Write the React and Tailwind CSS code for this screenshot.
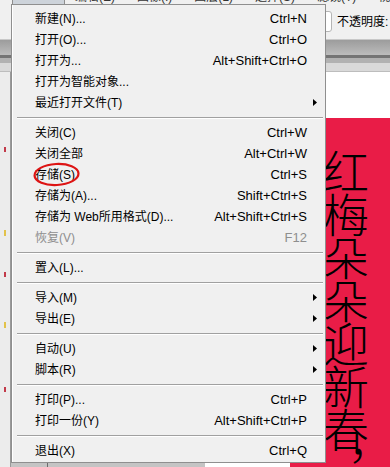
import React from "react";

const SEP = "sep";

const menu = [
  { label: "新建(N)...", key: "Ctrl+N" },
  { label: "打开(O)...", key: "Ctrl+O" },
  { label: "打开为...", key: "Alt+Shift+Ctrl+O" },
  { label: "打开为智能对象..." },
  { label: "最近打开文件(T)", sub: true },
  SEP,
  { label: "关闭(C)", key: "Ctrl+W" },
  { label: "关闭全部", key: "Alt+Ctrl+W" },
  { label: "存储(S)", key: "Ctrl+S", circled: true },
  { label: "存储为(A)...", key: "Shift+Ctrl+S" },
  { label: "存储为 Web所用格式(D)...", key: "Alt+Shift+Ctrl+S" },
  { label: "恢复(V)", key: "F12", disabled: true },
  SEP,
  { label: "置入(L)..." },
  SEP,
  { label: "导入(M)", sub: true },
  { label: "导出(E)", sub: true },
  SEP,
  { label: "自动(U)", sub: true },
  { label: "脚本(R)", sub: true },
  SEP,
  { label: "打印(P)...", key: "Ctrl+P" },
  { label: "打印一份(Y)", key: "Alt+Shift+Ctrl+P" },
  SEP,
  { label: "退出(X)", key: "Ctrl+Q" },
];

const menubar = ["编辑(E)", "图像(I)", "图层(L)", "选择(S)", "滤镜(T)", "视图(V)"];

function Arrow() {
  return (
    <svg width="4" height="7" viewBox="0 0 4 7">
      <polygon points="0,0 4,3.5 0,7" fill="#000" />
    </svg>
  );
}

function MenuRow({ item }) {
  if (item === SEP) {
    return (
      <div className="h-[9px] flex items-center">
        <div className="ml-[5px] mr-[2px] flex-1 h-[2px] border-t border-[#a0a0a0] border-b border-b-white" />
      </div>
    );
  }
  return (
    <div
      className={`relative h-[21px] flex items-center pl-[23px] ${
        item.disabled ? "text-[#8e8e8e]" : "text-black"
      }`}
    >
      <span className="flex-1 text-[12px] whitespace-pre">{item.label}</span>
      {item.key && <span className="text-[13px]">{item.key}</span>}
      <span className="w-[18px] pl-[6px] flex items-center">{item.sub && <Arrow />}</span>

      {/* red ring drawn around 存储(S) */}
      {item.circled && (
        <svg
          className="absolute left-[21px] top-[-2px]"
          width="48"
          height="25"
          viewBox="0 0 48 25"
        >
          <ellipse
            cx="23.5"
            cy="12.5"
            rx="22"
            ry="10.5"
            fill="none"
            stroke="#dd1414"
            strokeWidth="2.2"
            transform="rotate(-3 23.5 12.5)"
          />
        </svg>
      )}
    </div>
  );
}

export default function App() {
  return (
    <div
      className="relative w-[390px] h-[467px] overflow-hidden bg-[#f0f0f0] flex flex-col"
      style={{ fontFamily: '"Liberation Sans", "Noto Sans CJK SC", sans-serif' }}
    >
      {/* menubar, only its bottom edge shows */}
      <div className="shrink-0 h-[4px] overflow-hidden flex bg-[#f0f0f0]">
        <div className="shrink-0 ml-[12px] w-[53px] h-[4px] bg-[#cdd3da] border-x border-[#8e8e8e]" />
        <div className="flex gap-[22px] ml-[10px] -mt-[10px] h-[14px] text-[12px] leading-[14px] text-[#333] whitespace-nowrap">
          {menubar.map((m) => (
            <span key={m}>{m}</span>
          ))}
        </div>
      </div>

      {/* options bar */}
      <div className="shrink-0 h-[36px] flex items-center bg-[#f0f0f0] border-b border-[#c8c8c8]">
        <div className="shrink-0 ml-[300px] w-[32px] h-[21px] bg-white border border-[#b5b5b5] rounded-[3px]" />
        <span className="ml-[5px] text-[12px] text-black whitespace-nowrap">不透明度:</span>
      </div>

      {/* document tab strip */}
      <div className="shrink-0 h-[15px] bg-gradient-to-b from-[#9c9c9c] to-[#bcbcbc]" />
      <div className="shrink-0 h-[3px] bg-[#747474]" />
      <div className="shrink-0 h-[5px] bg-[#b1b1b1]" />
      <div className="shrink-0 h-[9px] bg-[#d9d9d9] border-b border-[#bdbdbd]" />

      {/* workspace */}
      <div className="flex-1 min-h-0 flex overflow-hidden">
        <div className="shrink-0 w-[11px] relative bg-[#ececec] border-r border-[#9a9a9a]">
          <div className="absolute left-[4px] top-[75px] w-[2px] h-[5px] bg-[#c23a4a]" />
          <div className="absolute left-[4px] top-[158px] w-[2px] h-[6px] bg-[#e2c24a]" />
          <div className="absolute left-[4px] top-[200px] w-[2px] h-[5px] bg-[#c23a4a]" />
          <div className="absolute left-[4px] top-[250px] w-[2px] h-[6px] bg-[#e2c24a]" />
          <div className="absolute left-[4px] top-[315px] w-[2px] h-[5px] bg-[#c23a4a]" />
        </div>
        <div className="shrink-0 w-[194px] bg-[#c4c4c4] flex">
          <div className="ml-[36px] w-px bg-[#6c6c6c]" />
        </div>
        <div className="flex-1 min-h-0 bg-white flex flex-col overflow-hidden">
          <div className="shrink-0 h-[46px]" />
          <div className="ml-[85px] flex-1 min-h-0 overflow-hidden bg-[#e91c47] pl-[32px] pt-[31px]">
            <div
              className="[writing-mode:vertical-rl] w-[48px] h-[400px] text-[46px] leading-[48px] text-black tracking-[-3px]"
              style={{ fontFamily: '"Noto Sans CJK SC", sans-serif', fontWeight: 300 }}
            >
              红梅朵朵迎新春，
            </div>
          </div>
        </div>
      </div>

      {/* the open File menu */}
      <div className="absolute left-[11px] top-[4px] w-[315px] bg-[#f0f0f0] border border-[#8f8f8f] shadow-[inset_1px_0_0_#ffffff] pt-[3px] pb-[1px]">
        {menu.map((item, i) => (
          <MenuRow key={i} item={item} />
        ))}
      </div>
    </div>
  );
}
